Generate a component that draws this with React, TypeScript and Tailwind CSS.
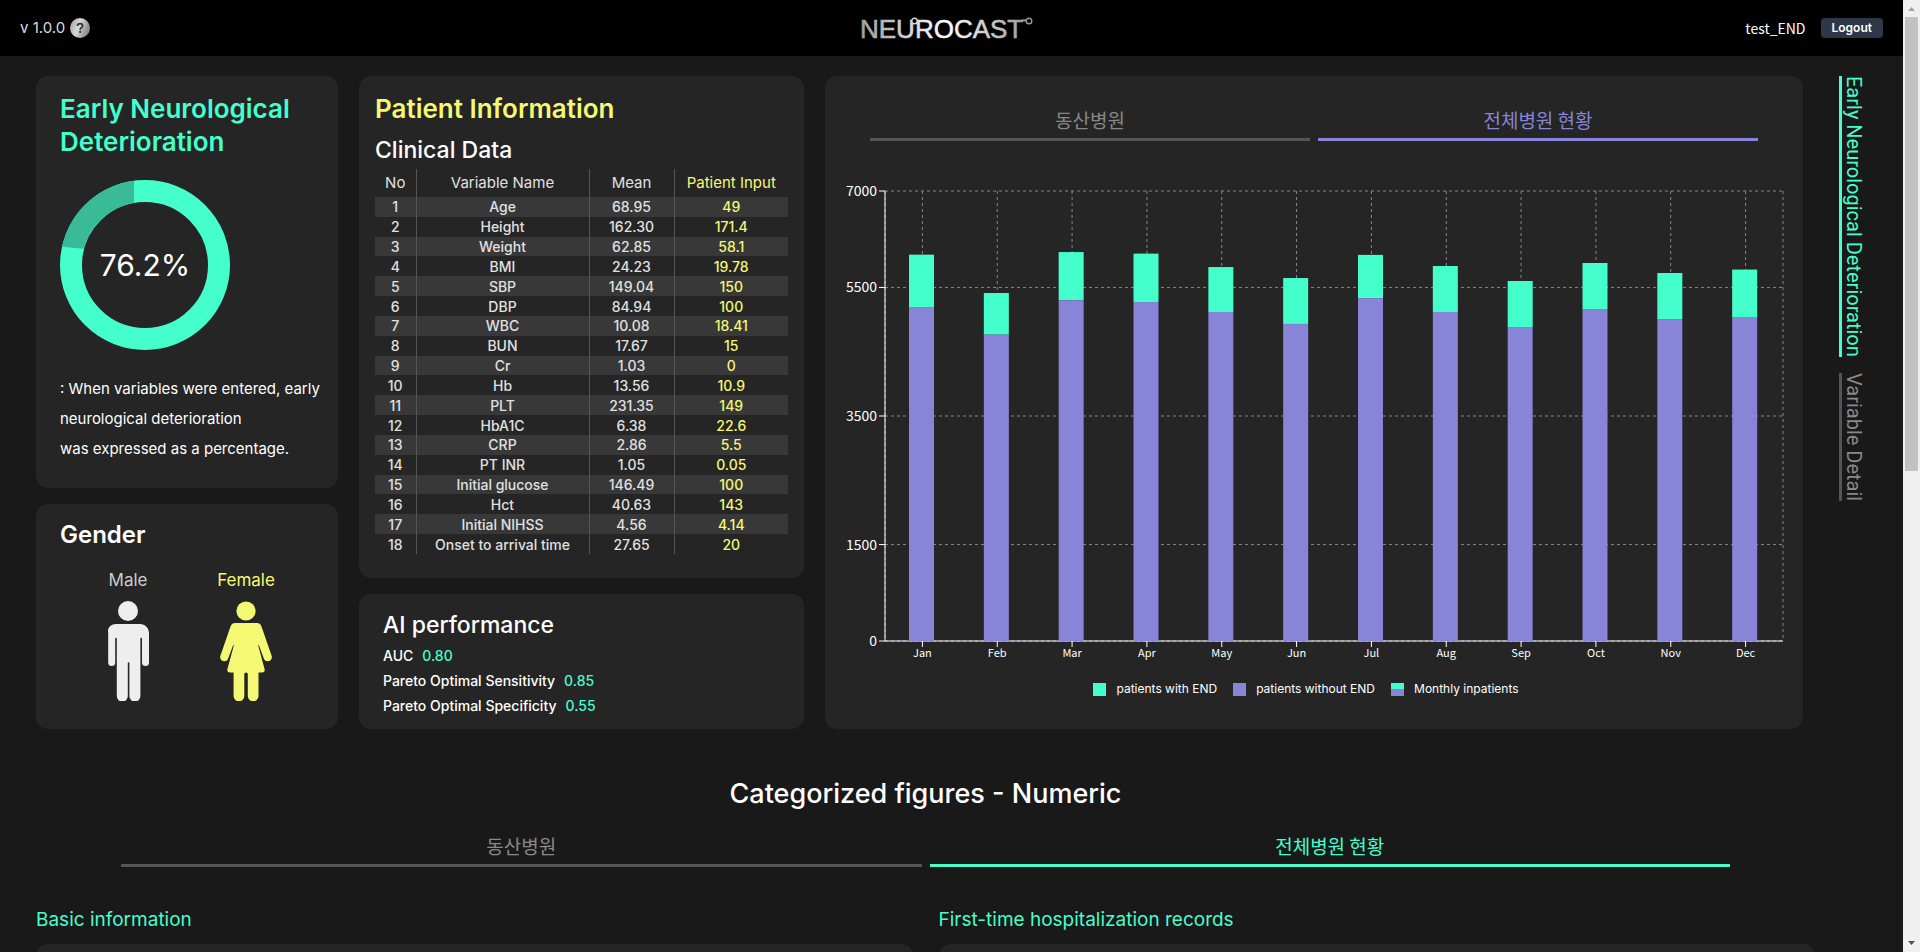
import React from "react";

type Variable = { name: string; mean: string; input: string };

const variables: Variable[] = [
  { name: "Age", mean: "68.95", input: "49" },
  { name: "Height", mean: "162.30", input: "171.4" },
  { name: "Weight", mean: "62.85", input: "58.1" },
  { name: "BMI", mean: "24.23", input: "19.78" },
  { name: "SBP", mean: "149.04", input: "150" },
  { name: "DBP", mean: "84.94", input: "100" },
  { name: "WBC", mean: "10.08", input: "18.41" },
  { name: "BUN", mean: "17.67", input: "15" },
  { name: "Cr", mean: "1.03", input: "0" },
  { name: "Hb", mean: "13.56", input: "10.9" },
  { name: "PLT", mean: "231.35", input: "149" },
  { name: "HbA1C", mean: "6.38", input: "22.6" },
  { name: "CRP", mean: "2.86", input: "5.5" },
  { name: "PT INR", mean: "1.05", input: "0.05" },
  { name: "Initial glucose", mean: "146.49", input: "100" },
  { name: "Hct", mean: "40.63", input: "143" },
  { name: "Initial NIHSS", mean: "4.56", input: "4.14" },
  { name: "Onset to arrival time", mean: "27.65", input: "20" },
];

const performance = [
  { label: "AUC", value: "0.80" },
  { label: "Pareto Optimal Sensitivity", value: "0.85" },
  { label: "Pareto Optimal Specificity", value: "0.55" },
];

// Monthly inpatients: total count and the part of it without END.
const months = [
  { month: "Jan", total: 6010, without: 5195 },
  { month: "Feb", total: 5413, without: 4765 },
  { month: "Mar", total: 6050, without: 5300 },
  { month: "Apr", total: 6026, without: 5273 },
  { month: "May", total: 5817, without: 5118 },
  { month: "Jun", total: 5646, without: 4932 },
  { month: "Jul", total: 6006, without: 5333 },
  { month: "Aug", total: 5833, without: 5118 },
  { month: "Sep", total: 5600, without: 4884 },
  { month: "Oct", total: 5880, without: 5164 },
  { month: "Nov", total: 5724, without: 5008 },
  { month: "Dec", total: 5778, without: 5040 },
];

const yTicks = [0, 1500, 3500, 5500, 7000];

function Card({ className, children }: { className: string; children?: React.ReactNode }) {
  return <section className={`rounded-xl bg-[#252525] ${className}`}>{children}</section>;
}

function Logo() {
  return (
    <svg className="h-[30px] w-[184px]" viewBox="0 0 184 30" role="img" aria-label="Neurocast">
      <defs>
        <linearGradient id="silver" gradientUnits="userSpaceOnUse" x1="4" y1="0" x2="176" y2="0">
          <stop offset="0" stopColor="#a3a3a3" />
          <stop offset="0.48" stopColor="#ffffff" />
          <stop offset="0.85" stopColor="#b0b0b0" />
          <stop offset="1" stopColor="#8f8f8f" />
        </linearGradient>
      </defs>
      <text
        x="0"
        y="25"
        fill="url(#silver)"
        stroke="url(#silver)"
        strokeWidth="0.6"
        fontSize="26"
        fontFamily="Liberation Sans, Arial, sans-serif"
      >
        NEUROCAST
      </text>
      <g fill="#000" stroke="url(#silver)" strokeWidth="1.4">
        <circle cx="54.500" cy="8" r="2.800" />
        <circle cx="169" cy="8" r="2.800" />
      </g>
      <path d="M162 7.400h4" stroke="#9c9c9c" strokeWidth="2" />
    </svg>
  );
}

function HelpIcon() {
  return (
    <svg className="block size-5" viewBox="0 0 20 20" aria-hidden="true">
      <defs>
        <linearGradient id="knob" x1="0" y1="0" x2="1" y2="0.4">
          <stop offset="0" stopColor="#9a9a9a" />
          <stop offset="0.5" stopColor="#d8d8d8" />
          <stop offset="1" stopColor="#8c8c8c" />
        </linearGradient>
      </defs>
      <circle cx="10" cy="10" r="10" fill="url(#knob)" />
      <path
        d="M7.4 8.1c0-1.6 1.1-2.5 2.6-2.5s2.6.9 2.6 2.3c0 1.7-2.4 1.9-2.4 3.8"
        fill="none"
        stroke="#333"
        strokeWidth="1.7"
      />
      <circle cx="10.2" cy="13.9" r="1.1" fill="#333" />
    </svg>
  );
}

function Donut() {
  return (
    <div className="grid size-[170px] place-items-center">
      <svg className="col-start-1 row-start-1 size-full" viewBox="0 0 170 170" aria-hidden="true">
        <circle cx="85" cy="85" r="74" fill="none" stroke="#44ffcc" strokeWidth="22" />
        <path d="M74 0.7A85 85 0 0 0 2 66.8L23.6 68.8A63 63 0 0 1 74 23Z" fill="#39bb97" />
      </svg>
      <span className="col-start-1 row-start-1 text-[30px] leading-9 text-white">76.2%</span>
    </div>
  );
}

function MaleFigure() {
  return (
    <svg className="h-[100px] w-[42px]" viewBox="0 0 42 100" fill="#eeeeee" aria-hidden="true">
      <circle cx="21" cy="10" r="10" />
      <path d="M9 23H33C38 23 42 27 42 32V61.500a3.500 3.500 0 0 1-7 0V37.500a.8.8 0 0 0-1.600 0V95a5 5 0 0 1-11 0V62a.8.8 0 0 0-1.600 0V95a5 5 0 0 1-11 0V37.500a.8.8 0 0 0-1.600 0V61.500a3.500 3.500 0 0 1-7 0V32C0 27 4 23 9 23Z" />
    </svg>
  );
}

function FemaleFigure() {
  return (
    <svg className="h-[100px] w-[52px]" viewBox="0 0 52 100" fill="#f5f872" aria-hidden="true">
      <circle cx="26" cy="10" r="9.600" />
      <path d="M15 22H37Q40 22 41.300 25L51.700 55C52.500 58 50 60.300 47.500 60.300Q45 60.300 44 58L38.800 44L38.200 44.500L44.700 68.500Q45 71.500 42 71.500H38.500V95a5 5 0 0 1-10.700 0V73Q27.800 71.500 26 71.500Q24.300 71.500 24.300 73V95a5 5 0 0 1-10.700 0V71.500H10Q7 71.500 7.300 68.500L13.800 44.500L13.200 44L8 58Q7 60.300 4.500 60.300C2 60.300-.5 58 .3 55L10.700 25Q12 22 15 22Z" />
    </svg>
  );
}

function HospitalTabs({ accent }: { accent: string }) {
  return (
    <div role="tablist" className="flex gap-2 font-['Noto_Sans_CJK_KR',sans-serif] text-[19px] leading-7">
      <button role="tab" aria-selected="false" className="flex-1 border-b-3 border-[#555] pb-1 text-[#888]">
        동산병원
      </button>
      <button role="tab" aria-selected="true" className={`flex-1 border-b-3 pb-1 ${accent}`}>
        전체병원 현황
      </button>
    </div>
  );
}

function InpatientChart() {
  const left = 60;
  const right = 958;
  const top = 31;
  const bottom = 481;
  const step = (right - left) / months.length;
  const y = (value: number) => bottom - (value * (bottom - top)) / 7000;

  return (
    <svg
      className="block h-auto w-full font-['Noto_Sans_CJK_KR',sans-serif]"
      viewBox="0 0 978 504"
      role="img"
      aria-label="Monthly inpatients"
    >
      <g stroke="#888" strokeDasharray="3 3">
        {yTicks.map((tick) => (
          <line key={tick} x1={left} x2={right} y1={y(tick)} y2={y(tick)} />
        ))}
        {months.map((m, i) => (
          <line key={m.month} x1={left + step * (i + 0.5)} x2={left + step * (i + 0.5)} y1={top} y2={bottom} />
        ))}
        <line x1={left} x2={left} y1={top} y2={bottom} />
        <line x1={right} x2={right} y1={top} y2={bottom} />
      </g>
      <g stroke="#fff">
        <line x1={left} x2={left} y1={top} y2={bottom} />
        <line x1={left} x2={right} y1={bottom} y2={bottom} />
        {yTicks.map((tick) => (
          <line key={tick} x1={left - 6} x2={left} y1={y(tick)} y2={y(tick)} />
        ))}
        {months.map((m, i) => (
          <line key={m.month} x1={left + step * (i + 0.5)} x2={left + step * (i + 0.5)} y1={bottom} y2={bottom + 6} />
        ))}
      </g>
      {months.map((m, i) => {
        const x = left + step * i + 24;
        return (
          <g key={m.month}>
            <rect x={x} y={y(m.total)} width="25" height={y(m.without) - y(m.total)} fill="#44ffcc" />
            <rect x={x} y={y(m.without)} width="25" height={bottom - y(m.without)} fill="#8884d8" />
          </g>
        );
      })}
      <g fill="#fff" fontSize="14" textAnchor="end">
        {yTicks.map((tick) => (
          <text key={tick} x={left - 8} y={y(tick) + 5}>
            {tick}
          </text>
        ))}
      </g>
      <g fill="#fff" fontSize="11" textAnchor="middle">
        {months.map((m, i) => (
          <text key={m.month} x={left + step * (i + 0.5)} y={bottom + 16}>
            {m.month}
          </text>
        ))}
      </g>
    </svg>
  );
}

function Legend() {
  return (
    <ul className="flex justify-center gap-4 pr-4 text-xs leading-5 text-white">
      <li className="flex items-center gap-[10px]">
        <span className="size-[13px] bg-[#44ffcc]" />
        patients with END
      </li>
      <li className="flex items-center gap-[10px]">
        <span className="size-[13px] bg-[#8884d8]" />
        patients without END
      </li>
      <li className="flex items-center gap-[10px]">
        <span className="flex size-[13px] flex-col">
          <span className="flex-1 bg-[#44ffcc]" />
          <span className="h-[7px] bg-[#8884d8]" />
        </span>
        Monthly inpatients
      </li>
    </ul>
  );
}

function ClinicalTable() {
  return (
    <table className="h-[385px] w-full table-fixed border-collapse text-center text-sm leading-[19px] text-[#e0e0e0]">
      <colgroup>
        <col className="w-[41px]" />
        <col className="w-[173px]" />
        <col className="w-[85px]" />
        <col />
      </colgroup>
      <thead>
        <tr className="h-7 text-[15px]">
          <th className="border-r border-[#555] p-0 pb-[2px] font-normal">No</th>
          <th className="border-r border-[#555] p-0 pb-[2px] font-normal">Variable Name</th>
          <th className="border-r border-[#555] p-0 pb-[2px] font-normal">Mean</th>
          <th className="p-0 pb-[2px] font-normal text-[#f5f872]">Patient Input</th>
        </tr>
      </thead>
      <tbody className="font-medium">
        {variables.map((v, i) => (
          <tr key={v.name} className="odd:bg-[#383838]">
            <td className="border-r border-[#555] p-0">{i + 1}</td>
            <td className="border-r border-[#555] p-0">{v.name}</td>
            <td className="border-r border-[#555] p-0">{v.mean}</td>
            <td className="p-0 text-[#f5f872]">{v.input}</td>
          </tr>
        ))}
      </tbody>
    </table>
  );
}

function Scrollbar() {
  return (
    <div className="flex w-[17px] shrink-0 flex-col items-center bg-[#f0f0f0]" aria-hidden="true">
      <svg className="h-[17px] w-[17px]" viewBox="0 0 17 17">
        <path d="M5 11L8.500 7L12 11Z" fill="#a3a3a3" />
      </svg>
      <div className="h-[454px] w-[13px] bg-[#c1c1c1]" />
      <svg className="mt-auto h-[17px] w-[17px]" viewBox="0 0 17 17">
        <path d="M5 6L8.500 10L12 6Z" fill="#505050" />
      </svg>
    </div>
  );
}

export default function App() {
  return (
    <div className="flex h-screen overflow-hidden bg-[#191919] font-['Inter','Noto_Sans_CJK_KR',sans-serif] text-white">
      <div className="min-w-0 flex-1">
        <header className="grid h-14 grid-cols-3 items-center bg-black px-5">
          <div className="flex items-center gap-[5px] text-[15px] leading-5 text-[#ddd]">
            v 1.0.0
            <button aria-label="Help">
              <HelpIcon />
            </button>
          </div>
          <div className="flex justify-center">
            <Logo />
          </div>
          <div className="flex items-center justify-end gap-[15px]">
            <span className="font-['Noto_Sans_CJK_KR',sans-serif] text-sm leading-5">test_END</span>
            <button className="h-5 rounded-sm bg-[#2d3748] px-[11px] text-xs font-semibold leading-5">Logout</button>
          </div>
        </header>

        <div className="flex pl-9 pt-5">
          <main className="min-w-0 flex-1">
            <div className="grid grid-cols-[minmax(0,302fr)_minmax(0,445fr)_minmax(0,978fr)] gap-[21px] pr-3">
              <div className="flex flex-col gap-4">
                <Card className="flex-1 px-6 pt-4">
                  <h1 className="text-[26px] font-semibold leading-[33px] text-[#44ffcc]">
                    Early Neurological
                    <br />
                    Deterioration
                  </h1>
                  <div className="pt-[22px]">
                    <Donut />
                  </div>
                  <p className="whitespace-nowrap pt-6 text-[15px] leading-[30px]">
                    : When variables were entered, early
                    <br />
                    neurological deterioration
                    <br />
                    was expressed as a percentage.
                  </p>
                </Card>
                <Card className="px-6 pb-7 pt-4">
                  <h2 className="text-2xl font-semibold leading-[30px]">Gender</h2>
                  <div className="grid grid-cols-[118px_118px] justify-center pt-[18px] text-[17px] leading-6">
                    <div className="flex flex-col items-center gap-[9px] text-[#ccc]">
                      Male
                      <MaleFigure />
                    </div>
                    <div className="flex flex-col items-center gap-[9px] text-[#f5f872]">
                      Female
                      <FemaleFigure />
                    </div>
                  </div>
                </Card>
              </div>

              <div className="flex flex-col gap-4">
                <Card className="flex-1 px-4 pb-6 pt-4">
                  <h2 className="text-[26px] font-semibold leading-[33px] text-[#f5f872]">Patient Information</h2>
                  <h3 className="pb-1 pt-[10px] text-[23px] font-medium leading-[30px]">Clinical Data</h3>
                  <ClinicalTable />
                </Card>
                <Card className="px-6 pb-[11px] pt-4">
                  <h2 className="text-[23px] font-medium leading-[30px]">AI performance</h2>
                  <dl className="pt-[3px] text-sm font-medium leading-[25px]">
                    {performance.map((p) => (
                      <div key={p.label} className="flex gap-[9px]">
                        <dt>{p.label}</dt>
                        <dd className="text-[#44ffcc]">{p.value}</dd>
                      </div>
                    ))}
                  </dl>
                </Card>
              </div>

              <Card className="pb-[25px] pt-[30px]">
                <div className="px-[45px] pb-[19px]">
                  <HospitalTabs accent="border-[#8884d8] text-[#8884d8]" />
                </div>
                <InpatientChart />
                <div className="pt-[15px]">
                  <Legend />
                </div>
              </Card>
            </div>

            <h2 className="pt-12 text-center text-[27px] font-medium leading-[34px]">Categorized figures - Numeric</h2>
            <div className="px-[85px] pt-[21px]">
              <HospitalTabs accent="border-[#44ffcc] text-[#44ffcc]" />
            </div>
            <div className="grid grid-cols-2 gap-[26px] pt-10 text-[19px] text-[#44ffcc]">
              <div>
                <h3 className="pb-[11px] leading-[26px]">Basic information</h3>
                <Card className="h-40" />
              </div>
              <div>
                <h3 className="pb-[11px] leading-[26px]">First-time hospitalization records</h3>
                <Card className="h-40" />
              </div>
            </div>
          </main>

          <nav className="flex w-[88px] shrink-0 flex-col items-start gap-4 pl-6 font-['Roboto',sans-serif] text-xl leading-6">
            <a href="#end" className="border-l-3 border-[#44ffcc] text-[#44ffcc] [writing-mode:vertical-rl]">
              Early Neurological Deterioration
            </a>
            <a href="#detail" className="border-l-3 border-[#555] text-[#888] [writing-mode:vertical-rl]">
              Variable Detail
            </a>
          </nav>
        </div>
      </div>
      <Scrollbar />
    </div>
  );
}
